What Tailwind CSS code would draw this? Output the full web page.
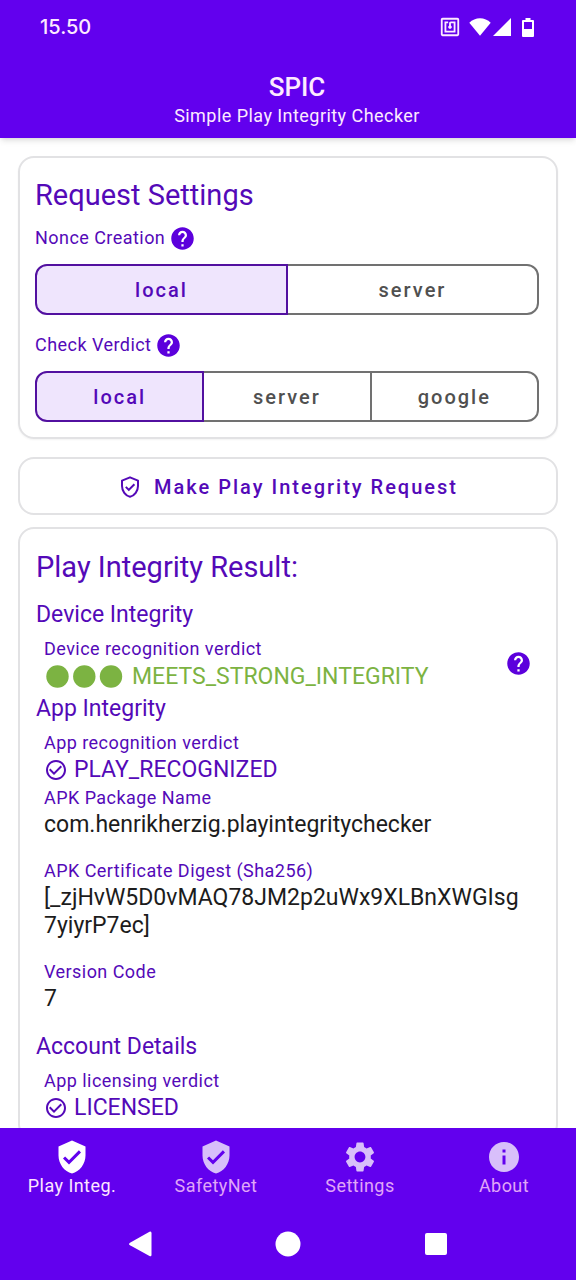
<!DOCTYPE html>
<html lang="en">
<head>
<meta charset="utf-8">
<meta name="viewport" content="width=device-width, initial-scale=1">
<title>SPIC - Simple Play Integrity Checker</title>
<script src="https://cdn.jsdelivr.net/npm/@tailwindcss/browser@4"></script>
</head>
<body class="flex h-screen flex-col overflow-hidden bg-white font-['Roboto',sans-serif] text-[#5409b8]">

<svg class="hidden" aria-hidden="true">
  <symbol id="help" viewBox="0 0 24 24"><path d="M12 2C6.480 2 2 6.480 2 12s4.480 10 10 10 10-4.480 10-10S17.520 2 12 2zm1 17h-2v-2h2v2zm2.070-7.750-.9.920C13.450 12.900 13 13.500 13 15h-2v-.5c0-1.100.45-2.100 1.170-2.830l1.240-1.260c.37-.36.59-.86.59-1.410 0-1.100-.9-2-2-2s-2 .9-2 2H8c0-2.210 1.790-4 4-4s4 1.790 4 4c0 .88-.36 1.680-.93 2.250z"/></symbol>
  <symbol id="check-circle" viewBox="0 0 24 24"><path d="M16.590 7.580 10 14.170l-3.590-3.580L5 12l5 5 8-8-1.410-1.420zM12 2C6.480 2 2 6.480 2 12s4.480 10 10 10 10-4.480 10-10S17.520 2 12 2zm0 18c-4.420 0-8-3.580-8-8s3.580-8 8-8 8 3.580 8 8-3.580 8-8 8z"/></symbol>
  <symbol id="shield" viewBox="0 0 24 24"><path d="M12 1 3 5v6c0 5.550 3.840 10.740 9 12 5.160-1.260 9-6.450 9-12V5l-9-4zm-2 16-4-4 1.410-1.410L10 14.170l6.590-6.590L18 9l-8 8z"/></symbol>
  <symbol id="shield-outline" viewBox="0 0 24 24"><path fill="none" stroke="currentColor" stroke-width="2" stroke-linejoin="round" d="M12 2.300 4 5.600V11c0 5 3.400 9.600 8 10.800 4.600-1.200 8-5.800 8-10.800V5.600L12 2.300z"/><path fill="none" stroke="currentColor" stroke-width="2" d="m7.800 11.900 3 3 5.600-5.600"/></symbol>
</svg>

<header class="relative z-10 bg-[#6200ee] text-[#fdeaff] shadow-md">
  <div class="flex h-[54px] items-center justify-between pr-[42px] pl-10">
    <span class="font-['Inter','Roboto',sans-serif] text-[20px] font-medium">15.50</span>
    <div class="flex items-center">
      <svg class="size-[22px]" viewBox="0 0 24 24" fill="currentColor" role="img" aria-label="NFC"><path d="M20 2H4c-1.100 0-2 .9-2 2v16c0 1.100.9 2 2 2h16c1.100 0 2-.9 2-2V4c0-1.100-.9-2-2-2zm0 18H4V4h16v16zM18 6h-5c-1.100 0-2 .9-2 2v2.280c-.6.350-1 .98-1 1.720 0 1.100.9 2 2 2s2-.9 2-2c0-.74-.4-1.380-1-1.720V8h3v8H8V8h2V6H6v12h12V6z"/></svg>
      <svg class="ml-2 h-[18px] w-[22px]" viewBox="0 0 22 18" fill="#fff" role="img" aria-label="Wi-Fi"><path d="M11 17.800.3 4.800C3.200 1.800 7 .2 11 .2s7.800 1.600 10.700 4.600L11 17.800z"/></svg>
      <svg class="ml-0.5 size-[18px]" viewBox="0 0 18 18" fill="#fff" role="img" aria-label="Mobile signal"><path d="M0 18 18 0v18z"/></svg>
      <svg class="ml-[11px] h-[19px] w-3" viewBox="0 0 12 19" fill="#fff" role="img" aria-label="Battery"><path fill-rule="evenodd" d="M3.500 0h5v2H11q1 0 1 1v15q0 1-1 1H1q-1 0-1-1V3q0-1 1-1h2.500zM2 4v7h8V4z"/></svg>
    </div>
  </div>
  <div class="flex h-[84px] flex-col items-center pt-[18px] pl-[18px]">
    <h1 class="text-[26px] leading-[30px] font-medium">SPIC</h1>
    <p class="text-lg leading-7 tracking-wide">Simple Play Integrity Checker</p>
  </div>
</header>

<main class="min-h-0 flex-1 overflow-hidden px-[18px] pt-[18px]">
  <section class="rounded-2xl border-2 border-[#e2e2e4] pt-[19px] pr-[17px] pb-[15px] pl-[15px] shadow-xs">
    <h2 class="mb-[11px] text-[29px] leading-9">Request Settings</h2>

    <fieldset>
      <legend class="mb-3 flex h-7 items-center gap-1 text-lg tracking-wide">Nonce Creation
        <button type="button" aria-label="Help on nonce creation"><svg class="size-[27px] fill-[#5c00dc]"><use href="#help"/></svg></button>
      </legend>
      <div class="flex h-[51px] text-xl font-medium tracking-widest text-[#505050]">
        <label class="flex flex-1 cursor-pointer items-center justify-center rounded-l-xl border-2 border-[#717171] has-checked:z-10 has-checked:border-[#5210a0] has-checked:bg-[#efe5fd] has-checked:text-[#5409b8]"><input class="sr-only" type="radio" name="nonce" checked>local</label>
        <label class="-ml-0.5 flex flex-1 cursor-pointer items-center justify-center rounded-r-xl border-2 border-[#717171] has-checked:z-10 has-checked:border-[#5210a0] has-checked:bg-[#efe5fd] has-checked:text-[#5409b8]"><input class="sr-only" type="radio" name="nonce">server</label>
      </div>
    </fieldset>

    <fieldset class="mt-4">
      <legend class="mb-3 flex h-7 items-center gap-1 text-lg tracking-wide">Check Verdict
        <button type="button" aria-label="Help on check verdict"><svg class="size-[27px] fill-[#5c00dc]"><use href="#help"/></svg></button>
      </legend>
      <div class="flex h-[51px] text-xl font-medium tracking-widest text-[#505050]">
        <label class="flex flex-1 cursor-pointer items-center justify-center rounded-l-xl border-2 border-[#717171] has-checked:z-10 has-checked:border-[#5210a0] has-checked:bg-[#efe5fd] has-checked:text-[#5409b8]"><input class="sr-only" type="radio" name="verdict" checked>local</label>
        <label class="-ml-0.5 flex flex-1 cursor-pointer items-center justify-center border-2 border-[#717171] has-checked:z-10 has-checked:border-[#5210a0] has-checked:bg-[#efe5fd] has-checked:text-[#5409b8]"><input class="sr-only" type="radio" name="verdict">server</label>
        <label class="-ml-0.5 flex flex-1 cursor-pointer items-center justify-center rounded-r-xl border-2 border-[#717171] has-checked:z-10 has-checked:border-[#5210a0] has-checked:bg-[#efe5fd] has-checked:text-[#5409b8]"><input class="sr-only" type="radio" name="verdict">google</label>
      </div>
    </fieldset>
  </section>

  <button type="button" class="mt-[18px] flex h-[58px] w-full items-center justify-center gap-3 rounded-2xl border-2 border-[#e2e2e4] pt-0.5 text-xl font-medium tracking-widest">
    <svg class="size-6"><use href="#shield-outline"/></svg>Make Play Integrity Request
  </button>

  <section class="mt-3 rounded-2xl border-2 border-[#e2e2e4] px-4 pt-5 pb-4">
    <h2 class="mb-3 text-[29px] leading-9">Play Integrity Result:</h2>

    <h3 class="mb-0.5 text-[23px] leading-9">Device Integrity</h3>
    <div class="flex items-center justify-between px-2">
      <dl>
        <dt class="text-lg leading-[27px] tracking-wide">Device recognition verdict</dt>
        <dd class="flex items-center pt-px text-[23px] leading-7 text-[#7cb342]">
          <svg class="mr-2 h-[27px] w-20" viewBox="0 0 80 27" fill="#7cb342" aria-hidden="true"><circle cx="13.500" cy="12.500" r="11.200"/><circle cx="40.300" cy="12.500" r="11.200"/><circle cx="67" cy="12.500" r="11.200"/></svg>MEETS_STRONG_INTEGRITY
        </dd>
      </dl>
      <button type="button" aria-label="Help on device recognition verdict"><svg class="size-[27px] fill-[#5c00dc]"><use href="#help"/></svg></button>
    </div>

    <h3 class="mb-0.5 text-[23px] leading-9">App Integrity</h3>
    <dl class="px-2">
      <dt class="text-lg leading-[27px] tracking-wide">App recognition verdict</dt>
      <dd class="flex items-center gap-1.5 text-[23px] leading-7"><svg class="size-6 fill-current"><use href="#check-circle"/></svg>PLAY_RECOGNIZED</dd>
      <dt class="text-lg leading-[27px] tracking-wide">APK Package Name</dt>
      <dd class="mb-[18px] text-[23px] leading-7 break-all text-[#1c1c1c]">com.henrikherzig.playintegritychecker</dd>
      <dt class="text-lg leading-[27px] tracking-wide">APK Certificate Digest (Sha256)</dt>
      <dd class="mb-[18px] pr-2 text-[23px] leading-7 break-all text-[#1c1c1c]">[_zjHvW5D0vMAQ78JM2p2uWx9XLBnXWGIsg7yiyrP7ec]</dd>
      <dt class="text-lg leading-[27px] tracking-wide">Version Code</dt>
      <dd class="mb-4 text-[23px] leading-7 text-[#1c1c1c]">7</dd>
    </dl>

    <h3 class="mb-0.5 text-[23px] leading-9">Account Details</h3>
    <dl class="px-2">
      <dt class="text-lg leading-[27px] tracking-wide">App licensing verdict</dt>
      <dd class="flex items-center gap-1.5 text-[23px] leading-7"><svg class="size-6 fill-current"><use href="#check-circle"/></svg>LICENSED</dd>
    </dl>
  </section>
</main>

<footer class="relative z-10 bg-[#6200ee]">
  <nav class="grid h-20 grid-cols-4 pt-[11px] text-lg leading-[22px] tracking-wide text-[#e0a6f8]" aria-label="Main">
    <a href="#play" class="flex flex-col items-center text-[#fde6ff]" aria-current="page"><svg class="size-9 fill-white"><use href="#shield"/></svg>Play Integ.</a>
    <a href="#safetynet" class="flex flex-col items-center"><svg class="size-9 fill-[#d8bffa]"><use href="#shield"/></svg>SafetyNet</a>
    <a href="#settings" class="flex flex-col items-center"><svg class="size-9 fill-[#d8bffa]" viewBox="0 0 24 24"><path d="M19.140 12.940c.04-.3.060-.61.060-.94 0-.32-.02-.64-.07-.94l2.030-1.580c.18-.14.230-.41.120-.61l-1.920-3.320c-.12-.22-.37-.29-.59-.22l-2.390.96c-.5-.38-1.030-.7-1.620-.94L14.400 2.810c-.04-.24-.24-.41-.48-.41h-3.840c-.24 0-.43.170-.47.410L9.250 5.350c-.59.240-1.130.57-1.620.94L5.240 5.330c-.22-.08-.47 0-.59.220L2.740 8.870c-.12.210-.08.470.12.610l2.030 1.580c-.05.300-.09.630-.09.940s.02.640.07.940l-2.030 1.580c-.18.140-.23.410-.12.610l1.920 3.320c.12.220.37.290.59.220l2.390-.96c.5.380 1.030.7 1.620.94l.36 2.540c.05.240.24.410.48.410h3.840c.24 0 .44-.17.470-.41l.36-2.540c.59-.24 1.130-.56 1.620-.94l2.390.96c.22.080.47 0 .59-.22l1.920-3.320c.12-.22.070-.47-.12-.61l-2.010-1.580zM12 15.600c-1.980 0-3.600-1.620-3.600-3.600s1.620-3.600 3.600-3.600 3.600 1.620 3.600 3.600-1.620 3.600-3.600 3.600z"/></svg>Settings</a>
    <a href="#about" class="flex flex-col items-center"><svg class="size-9 fill-[#d8bffa]" viewBox="0 0 24 24"><path d="M12 2C6.480 2 2 6.480 2 12s4.480 10 10 10 10-4.480 10-10S17.520 2 12 2zm1 15h-2v-6h2v6zm0-8h-2V7h2v2z"/></svg>About</a>
  </nav>
  <div class="flex h-[72px] items-center justify-center gap-[122px]">
    <button type="button" aria-label="Back"><svg class="size-[26px] fill-white" viewBox="0 0 26 26"><path d="M22.500.8q2-.9 2 1.400v21.600q0 2.200-2 1.300L3 14.300q-2-1.300 0-2.600z"/></svg></button>
    <button type="button" aria-label="Home"><svg class="size-[26px] fill-white" viewBox="0 0 26 26"><circle cx="13" cy="13" r="12.500"/></svg></button>
    <button type="button" aria-label="Recent apps"><svg class="size-[26px] fill-white" viewBox="0 0 26 26"><rect x="2" y="2" width="22" height="22" rx="2"/></svg></button>
  </div>
</footer>
</body>
</html>
